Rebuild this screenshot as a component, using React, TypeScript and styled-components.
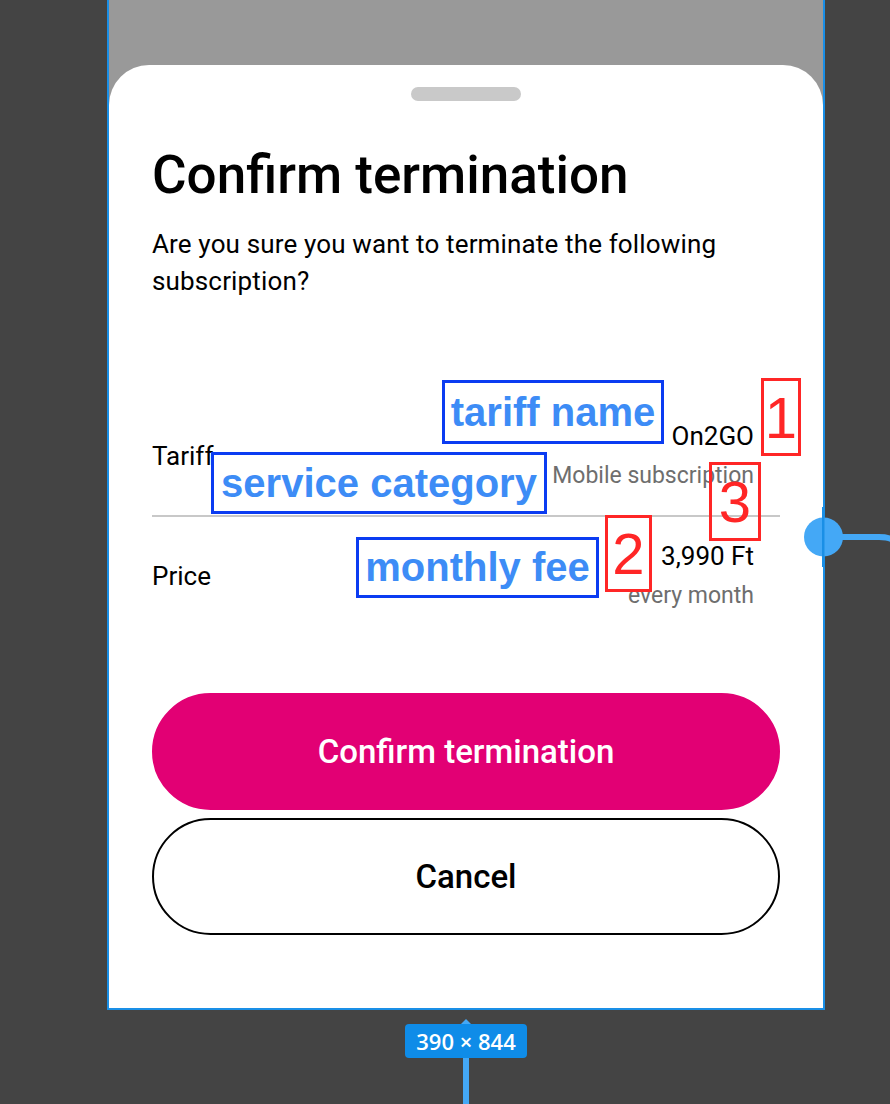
import * as React from 'react';
import styled, { createGlobalStyle } from 'styled-components';

const Global = createGlobalStyle`
	html, body {
		margin: 0;
		padding: 0;
		background: #444444;
		overflow: hidden;
	}
	* {
		box-sizing: border-box;
	}
`;

const magenta = '#e20074';
const figmaBlue = '#1a8fe6';
const figmaBlueLight = '#44a8f6';

interface Detail {
	label: string
	value: string
	note: string
}

const details: Detail[] = [
	{ label: 'Tariff', value: 'On2GO', note: 'Mobile subscription' },
	{ label: 'Price', value: '3,990 Ft', note: 'every month' },
];

interface Tag {
	text: string
	x: number
	y: number
	w: number
	h: number
}

const blueTags: Tag[] = [
	{ text: 'tariff name', x: 442, y: 380, w: 222, h: 64 },
	{ text: 'service category', x: 211, y: 452, w: 336, h: 62 },
	{ text: 'monthly fee', x: 356, y: 537, w: 243, h: 61 },
];

const redTags: Tag[] = [
	{ text: '1', x: 761, y: 378, w: 40, h: 78 },
	{ text: '3', x: 709, y: 462, w: 52, h: 79 },
	{ text: '2', x: 605, y: 515, w: 47, h: 77 },
];

export default class App extends React.Component {
	render() {
		return (
			<Page>
				<Global />
				<FrameColumn>
					<Frame>
						<Scrim />
						<Sheet>
							<Handle />
							<Title>Confirm termination</Title>
							<Lead>Are you sure you want to terminate the following subscription?</Lead>
							<Table>
								{details.map((d, i) => (
									<Row key={d.label} last={i === details.length - 1}>
										<Label>{d.label}</Label>
										<Values>
											<Value>{d.value}</Value>
											<Note>{d.note}</Note>
										</Values>
									</Row>
								))}
							</Table>
							<Actions>
								<Button primary>Confirm termination</Button>
								<Button>Cancel</Button>
							</Actions>
						</Sheet>
					</Frame>
					<Pointer />
					<SizeBadge>390 × 844</SizeBadge>
					<Stem />
				</FrameColumn>

				{blueTags.map(t => (
					<BlueTag key={t.text} style={{ left: t.x, top: t.y, width: t.w, height: t.h }}>
						{t.text}
					</BlueTag>
				))}
				{redTags.map(t => (
					<RedTag key={t.text} style={{ left: t.x, top: t.y, width: t.w, height: t.h }}>
						{t.text}
					</RedTag>
				))}

				<ResizeHandle width="90" height="60" viewBox="0 0 90 60">
					<path d="M 20 30 L 75 30 Q 86 30 90 34" stroke={figmaBlueLight} strokeWidth="6" fill="none" />
					<circle cx="19.5" cy="30" r="19.5" fill={figmaBlueLight} />
					<rect x="18" y="0" width="2.5" height="60" fill={figmaBlue} />
				</ResizeHandle>
			</Page>
		)
	}
}

const Page = styled.div`
	position: relative;
	width: 890px;
	height: 1104px;
	overflow: hidden;
	font-family: Roboto, "Noto Sans", sans-serif;
`;

const FrameColumn = styled.div`
	margin-left: 107px;
	width: 718px;
	display: flex;
	flex-direction: column;
	align-items: center;
`;

const Frame = styled.div`
	width: 100%;
	height: 1010px;
	display: flex;
	flex-direction: column;
	background: #999999;
	border: 2px solid ${figmaBlue};
	border-top: none;
`;

const Scrim = styled.div`
	height: 65px;
	flex-shrink: 0;
`;

const Sheet = styled.div`
	flex: 1;
	background: #ffffff;
	border-radius: 40px 40px 0 0;
	padding: 22px 43px 0;
	display: flex;
	flex-direction: column;
`;

const Handle = styled.div`
	width: 110px;
	height: 14px;
	border-radius: 7px;
	background: #c9c9c9;
	align-self: center;
`;

const Title = styled.h1`
	margin: 44px 0 0;
	font-size: 53px;
	line-height: 60px;
	font-weight: 500;
	color: #000;
`;

const Lead = styled.p`
	margin: 21px 0 0;
	font-size: 26px;
	line-height: 37px;
	letter-spacing: 0.15px;
	color: #000;
	max-width: 600px;
`;

const Table = styled.div`
	margin-top: 97px;
	display: flex;
	flex-direction: column;
`;

const Row = styled.div<{ last?: boolean }>`
	display: flex;
	align-items: center;
	justify-content: space-between;
	padding: 20px 26px 20px 0;
	border-bottom: ${p => p.last ? 'none' : '2px solid #c8c8c8'};
`;

const Label = styled.span`
	font-size: 26px;
	color: #000;
`;

const Values = styled.div`
	display: flex;
	flex-direction: column;
	align-items: flex-end;
`;

const Value = styled.span`
	font-size: 26px;
	line-height: 39px;
	color: #000;
`;

const Note = styled.span`
	font-size: 23px;
	line-height: 39px;
	color: #6e6e6e;
`;

const Actions = styled.div`
	margin-top: 58px;
	display: flex;
	flex-direction: column;
	gap: 8px;
`;

const Button = styled.button<{ primary?: boolean }>`
	height: 117px;
	border-radius: 59px;
	border: 2px solid ${p => p.primary ? magenta : '#000'};
	background: ${p => p.primary ? magenta : '#fff'};
	color: ${p => p.primary ? '#fff' : '#000'};
	font-family: Roboto, "Noto Sans", sans-serif;
	font-size: 33px;
	font-weight: 500;
`;

const Pointer = styled.div`
	margin-top: 9px;
	width: 0;
	height: 0;
	border-left: 5px solid transparent;
	border-right: 5px solid transparent;
	border-bottom: 5px solid ${figmaBlueLight};
`;

const SizeBadge = styled.div`
	width: 122px;
	height: 34px;
	border-radius: 4px;
	background: #0f8ce8;
	color: #fff;
	font-family: "Open Sans", Roboto, sans-serif;
	font-size: 22px;
	font-weight: 600;
	line-height: 34px;
	text-align: center;
`;

const Stem = styled.div`
	width: 6px;
	height: 60px;
	background: ${figmaBlueLight};
`;

const BlueTag = styled.div`
	position: absolute;
	border: 3px solid #0b3cf2;
	color: #3d8cf6;
	font-family: "Liberation Sans", Arial, sans-serif;
	font-weight: 700;
	font-size: 40px;
	display: flex;
	align-items: center;
	justify-content: center;
	white-space: nowrap;
`;

const RedTag = styled.div`
	position: absolute;
	border: 3px solid #ff2626;
	color: #ff2626;
	font-family: "Liberation Sans", Arial, sans-serif;
	font-size: 58px;
	display: flex;
	align-items: center;
	justify-content: center;
`;

const ResizeHandle = styled.svg`
	position: absolute;
	left: 804px;
	top: 507px;
	overflow: visible;
`;
